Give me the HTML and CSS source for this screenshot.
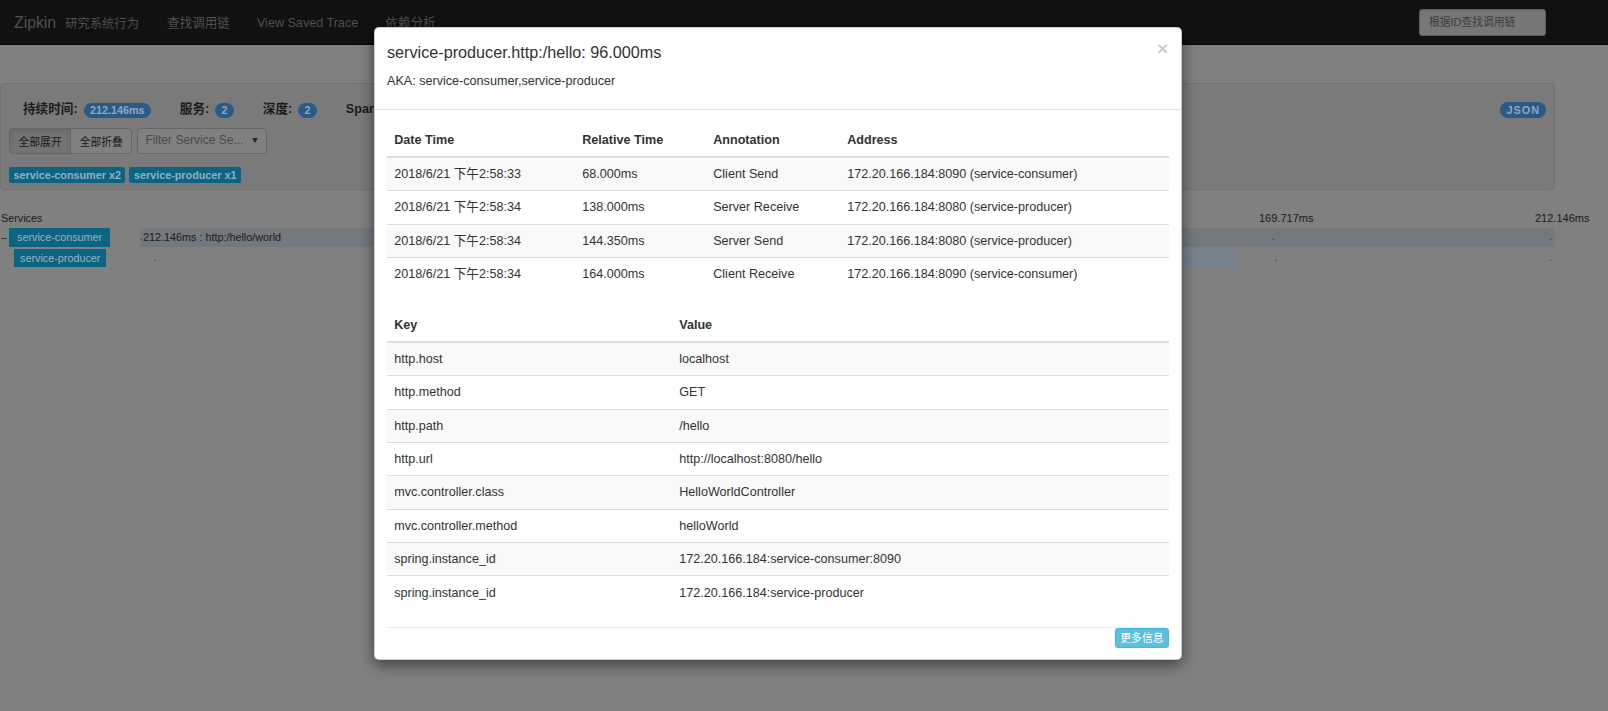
FILE: index.html
```html
<!DOCTYPE html>
<html lang="zh-CN">
<head>
<meta charset="utf-8">
<title>Zipkin - Trace</title>
<link rel="stylesheet" href="styles.css">
</head>
<body>
<nav class="navbar">
  <div class="brand"><span class="brand-name">Zipkin</span><span class="brand-sub">研究系统行为</span></div>
  <ul class="nav-links">
    <li>查找调用链</li>
    <li>View Saved Trace</li>
    <li>依赖分析</li>
  </ul>
  <div class="nav-search"><input type="text" placeholder="根据ID查找调用链"></div>
</nav>

<main class="page">
  <section class="well">
    <div class="summary">
      <span class="sum-label">持续时间:</span><span class="badge">212.146ms</span>
      <span class="sum-label">服务:</span><span class="badge">2</span>
      <span class="sum-label">深度:</span><span class="badge">2</span>
      <span class="sum-label">Span总数:</span><span class="badge">3</span>
      <span class="badge badge-json">JSON</span>
    </div>
    <div class="controls">
      <div class="btn-group">
        <button class="btn active">全部展开</button>
        <button class="btn">全部折叠</button>
      </div>
      <div class="select"><span class="select-text">Filter Service Se...</span><span class="caret"></span></div>
    </div>
    <div class="tags">
      <span class="tag">service-consumer x2</span>
      <span class="tag">service-producer x1</span>
    </div>
  </section>

  <section class="timeline">
    <div class="tl-head">
      <div class="tl-services">Services</div>
      <div class="tl-axis">
        <span class="tick-label" style="left:calc(20% - 13px)">42.429ms</span>
        <span class="tick-label" style="left:calc(40% - 13px)">84.858ms</span>
        <span class="tick-label" style="left:calc(60% - 13px)">127.288ms</span>
        <span class="tick-label" style="left:calc(80% - 13px)">169.717ms</span>
        <span class="tick-label" style="left:calc(100% - 20px)">212.146ms</span>
      </div>
    </div>
    <div class="tl-row">
      <div class="tl-svc"><span class="toggle">–</span><span class="svc-tag">service-consumer</span></div>
      <div class="tl-bars">
        <div class="bar bar-root" style="left:0%;width:100%"><span class="bar-text">212.146ms : http:/hello/world</span></div>
        <span class="dot" style="left:0%">.</span>
        <span class="dot" style="left:20%">.</span>
        <span class="dot" style="left:40%">.</span>
        <span class="dot" style="left:60%">.</span>
        <span class="dot" style="left:80%">.</span>
        <span class="dot" style="left:calc(100% - 6px)">.</span>
      </div>
    </div>
    <div class="tl-row tl-row-child">
      <div class="tl-svc"><span class="svc-tag">service-producer</span></div>
      <div class="tl-bars">
        <div class="bar bar-child" style="left:32.05%;width:45.25%"></div>
        <span class="dot" style="left:0%">.</span>
        <span class="dot" style="left:20%">.</span>
        <span class="dot" style="left:40%">.</span>
        <span class="dot" style="left:60%">.</span>
        <span class="dot" style="left:80%">.</span>
        <span class="dot" style="left:calc(100% - 6px)">.</span>
      </div>
    </div>
  </section>
</main>

<div class="modal" role="dialog">
  <div class="modal-header">
    <button class="close" type="button">×</button>
    <h4 class="modal-title">service-producer.http:/hello: 96.000ms</h4>
    <p class="aka">AKA: service-consumer,service-producer</p>
  </div>
  <div class="modal-body">
    <table class="table">
      <colgroup><col class="c-date"><col class="c-rel"><col class="c-ann"><col></colgroup>
      <thead>
        <tr><th>Date Time</th><th>Relative Time</th><th>Annotation</th><th>Address</th></tr>
      </thead>
      <tbody>
        <tr><td>2018/6/21 下午2:58:33</td><td>68.000ms</td><td>Client Send</td><td>172.20.166.184:8090 (service-consumer)</td></tr>
        <tr><td>2018/6/21 下午2:58:34</td><td>138.000ms</td><td>Server Receive</td><td>172.20.166.184:8080 (service-producer)</td></tr>
        <tr><td>2018/6/21 下午2:58:34</td><td>144.350ms</td><td>Server Send</td><td>172.20.166.184:8080 (service-producer)</td></tr>
        <tr><td>2018/6/21 下午2:58:34</td><td>164.000ms</td><td>Client Receive</td><td>172.20.166.184:8090 (service-consumer)</td></tr>
      </tbody>
    </table>
    <table class="table">
      <colgroup><col class="c-key"><col></colgroup>
      <thead>
        <tr><th>Key</th><th>Value</th></tr>
      </thead>
      <tbody>
        <tr><td>http.host</td><td>localhost</td></tr>
        <tr><td>http.method</td><td>GET</td></tr>
        <tr><td>http.path</td><td>/hello</td></tr>
        <tr><td>http.url</td><td>http://localhost:8080/hello</td></tr>
        <tr><td>mvc.controller.class</td><td>HelloWorldController</td></tr>
        <tr><td>mvc.controller.method</td><td>helloWorld</td></tr>
        <tr><td>spring.instance_id</td><td>172.20.166.184:service-consumer:8090</td></tr>
        <tr><td>spring.instance_id</td><td>172.20.166.184:service-producer</td></tr>
      </tbody>
    </table>
    <div class="modal-foot"><button class="btn-info" type="button">更多信息</button></div>
  </div>
</div>
</body>
</html>
```

FILE: styles.css
```css
html, body {
  margin: 0;
  padding: 0;
}

body {
  background: #808080;
  font-family: "Liberation Sans", Arial, "Noto Sans CJK SC", sans-serif;
  font-size: 12.6px;
  line-height: 1.42857;
  color: #1a1a1a;
  width: 1608px;
  height: 711px;
  overflow: hidden;
  position: relative;
}

/* ---------- navbar (dimmed by modal backdrop) ---------- */
.navbar {
  display: flex;
  align-items: center;
  height: 45px;
  box-sizing: border-box;
  padding-top: 3px;
  background: #111;
  border-bottom: 1px solid #050505;
}

.brand {
  display: flex;
  align-items: baseline;
  padding-left: 14px;
  color: #505050;
}

.brand-name {
  font-size: 15.8px;
}

.brand-sub {
  font-size: 12.3px;
  margin-left: 9px;
}

.nav-links {
  display: flex;
  align-items: baseline;
  gap: 27px;
  margin: 0 0 0 28px;
  padding: 0;
  list-style: none;
  font-size: 12.6px;
  color: #4f4f4f;
}

.nav-search {
  margin-left: auto;
  margin-right: 62px;
  margin-top: -3px;
}

.nav-search input {
  display: block;
  width: 127px;
  height: 27px;
  box-sizing: border-box;
  background: #777;
  border: 1px solid #5c5c5c;
  border-radius: 3px;
  padding: 0 9px;
  font-family: inherit;
  font-size: 10.8px;
  color: #3c3c3c;
  box-shadow: inset 0 1px 1px rgba(0, 0, 0, 0.04);
}

.nav-search input::placeholder {
  color: #3c3c3c;
}

/* ---------- page ---------- */
.page {
  width: 1555px;
}

.well {
  margin-top: 38px;
  height: 107px;
  box-sizing: border-box;
  background: #7a7a7a;
  border: 1px solid #717171;
  border-radius: 4px;
  padding: 17px 8px 6px;
}

.summary {
  display: flex;
  align-items: center;
  height: 18px;
  padding-left: 14px;
}

.sum-label {
  font-weight: bold;
  font-size: 12.6px;
  color: #1a1a1a;
  margin-left: 29px;
}

.sum-label:first-child {
  margin-left: 0;
}

.badge {
  display: inline-block;
  margin-left: 6px;
  height: 15px;
  line-height: 15px;
  padding: 0 6.3px;
  border-radius: 8px;
  background: #295a88;
  color: #94a6b8;
  font-size: 10.8px;
  font-weight: bold;
}

.badge-json {
  margin-left: auto;
  height: 16px;
  line-height: 16px;
  letter-spacing: 1px;
  padding: 0 6px 0 7px;
}

.controls {
  display: flex;
  margin-top: 9px;
  height: 26px;
}

.btn-group {
  display: flex;
}

.btn {
  height: 26px;
  box-sizing: border-box;
  padding: 0 8.5px;
  margin: 0;
  border: 1px solid #666;
  background: #808080;
  color: #1a1a1a;
  font-family: inherit;
  font-size: 10.8px;
  border-radius: 0 4px 4px 0;
  margin-left: -1px;
}

.btn:first-child {
  border-radius: 4px 0 0 4px;
  margin-left: 0;
}

.btn.active {
  background: #737373;
  box-shadow: inset 0 3px 5px rgba(0, 0, 0, 0.08);
}

.select {
  display: flex;
  align-items: center;
  justify-content: space-between;
  margin-left: 5px;
  width: 130px;
  height: 26px;
  box-sizing: border-box;
  border: 1px solid #666;
  border-radius: 4px;
  background: #808080;
  padding: 0 8px 0 7px;
}

.select-text {
  font-size: 12px;
  color: #4a4a4a;
}

.caret {
  width: 0;
  height: 0;
  border-left: 3.5px solid transparent;
  border-right: 3.5px solid transparent;
  border-top: 5px solid #2a2a2a;
  margin-top: -2px;
}

.tags {
  display: flex;
  gap: 4px;
  margin-top: 13px;
  height: 16px;
}

.tag {
  height: 16px;
  line-height: 16px;
  padding: 0 4.5px;
  border-radius: 2px;
  background: #0b6482;
  color: #8db3c0;
  font-size: 10.8px;
  font-weight: bold;
}

/* ---------- timeline ---------- */
.timeline {
  margin-top: 20px;
}

.tl-head {
  display: flex;
  height: 16px;
  line-height: 16px;
  font-size: 10.8px;
  color: #1a1a1a;
}

.tl-services {
  width: 140px;
  flex: none;
  padding-left: 1px;
  box-sizing: border-box;
}

.tl-axis {
  position: relative;
  flex: 1;
}

.tick-label {
  position: absolute;
  top: 0;
  font-size: 11px;
  white-space: nowrap;
}

.tl-row {
  display: flex;
  height: 19px;
  margin-top: 2px;
  font-size: 10.8px;
}

.tl-row-child {
  height: 18px;
}

.tl-svc {
  width: 140px;
  flex: none;
  display: flex;
  align-items: stretch;
}

.toggle {
  width: 9px;
  padding-left: 1px;
  box-sizing: border-box;
  line-height: 19px;
  color: #1a1a1a;
  font-size: 10px;
}

.tl-row-child .tl-svc {
  padding-left: 14px;
}

.svc-tag {
  background: #0b6482;
  color: #9db4bd;
  padding: 0 8px;
  line-height: 19px;
}

.tl-row-child .svc-tag {
  padding: 0 6px;
  line-height: 18px;
}

.tl-bars {
  position: relative;
  flex: 1;
}

.bar {
  position: absolute;
  top: 0;
  bottom: 0;
}

.bar-root {
  background: #72797f;
}

.bar-child {
  background: #76828e;
}

.bar-text {
  display: block;
  padding-left: 3px;
  line-height: 19px;
  color: #1a1a1a;
  white-space: nowrap;
}

.dot {
  position: absolute;
  top: 0;
  line-height: 17px;
  font-size: 10px;
  color: #2a2a2a;
}

/* ---------- modal ---------- */
.modal {
  position: absolute;
  top: 27px;
  left: 374px;
  width: 808px;
  box-sizing: border-box;
  background: #fff;
  border: 1px solid rgba(0, 0, 0, 0.2);
  border-radius: 5px;
  box-shadow: 0 5px 15px rgba(0, 0, 0, 0.5);
  color: #333;
  font-size: 12.6px;
}

.modal-header {
  padding: 15px 13px 12px 12px;
  border-bottom: 1px solid #e5e5e5;
}

.close {
  float: right;
  margin-top: -4px;
  padding: 0;
  border: 0;
  background: transparent;
  font-family: "Liberation Sans", Arial, sans-serif;
  font-size: 19px;
  font-weight: bold;
  line-height: 1;
  color: #000;
  opacity: 0.2;
}

.modal-title {
  margin: 0;
  font-size: 16.2px;
  font-weight: normal;
  line-height: 18px;
}

.aka {
  margin: 11px 0 7px;
  line-height: 18px;
}

.modal-body {
  padding: 13.5px 12px 11px;
}

.table {
  width: 100%;
  border-collapse: collapse;
  table-layout: fixed;
  margin-bottom: 18px;
}

.c-date { width: 188px; }
.c-rel { width: 131px; }
.c-ann { width: 134px; }
.c-key { width: 285px; }

.table th,
.table td {
  padding: 7.2px;
  line-height: 18px;
  text-align: left;
  white-space: nowrap;
}

.table th {
  font-weight: bold;
  border-bottom: 2px solid #ddd;
}

.table td {
  border-top: 1px solid #ddd;
}

.table tbody tr:nth-child(odd) {
  background: #f9f9f9;
}

.modal-foot {
  display: flex;
  justify-content: flex-end;
  border-top: 1px solid #eee;
}

.btn-info {
  margin: 0;
  padding: 1px 4.5px;
  border: 1px solid #46b8da;
  border-radius: 2.7px;
  background: #5bc0de;
  color: #fff;
  font-family: inherit;
  font-size: 10.8px;
  line-height: 16.2px;
}
```
